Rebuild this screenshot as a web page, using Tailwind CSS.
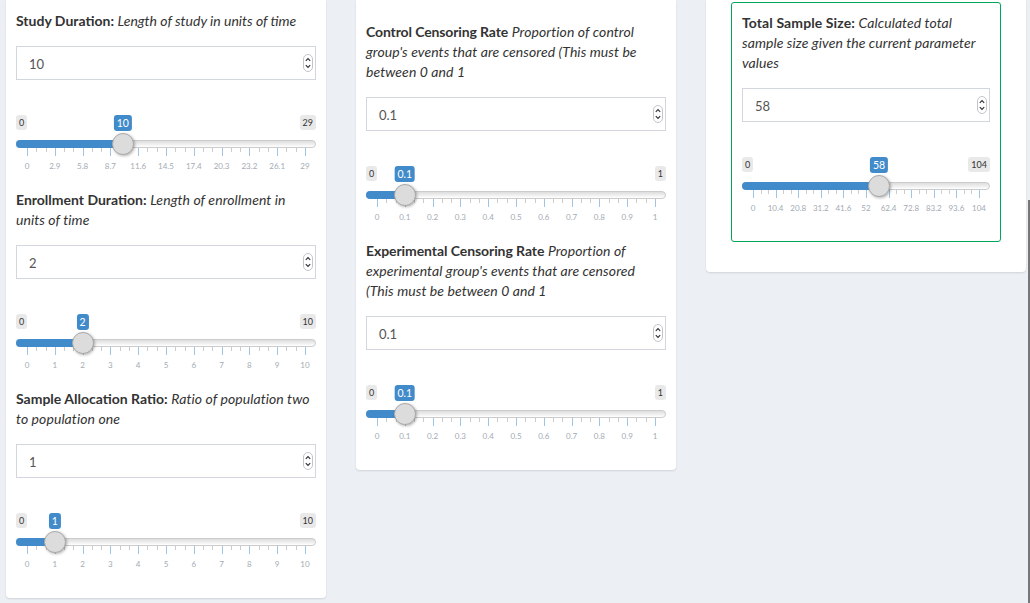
<!DOCTYPE html>
<html lang="en">
<head>
    <meta charset="UTF-8">
    <meta name="viewport" content="width=device-width, initial-scale=1.0">
    <title>Sample Size</title>
    <script src="https://cdn.jsdelivr.net/npm/@tailwindcss/browser@4"></script>
</head>
<body class="bg-[#ecf0f5] font-['Lato','Noto_Sans',sans-serif] text-[14px] leading-[20px] text-[#333]">
    <div class="relative h-[603px] w-[1030px] overflow-hidden">
        <div class="flex items-start gap-[30px] pl-[6px]">
            <!-- left column -->
            <div class="w-[320px] rounded-b-[4px] bg-white px-[10px] pt-[11px] pb-[10px] shadow-[0_1px_2px_rgba(0,0,0,0.12)]">
                <p class="mb-[15px]"><b>Study Duration:</b> <i>Length of study in units of time</i></p>
                <div data-value="10" data-max="29"></div>
                <p class="mb-[15px]"><b>Enrollment Duration:</b> <i class="tracking-[0.08px]">Length of enrollment in<br>units of time</i></p>
                <div data-value="2" data-max="10"></div>
                <p class="mb-[15px]"><b>Sample Allocation Ratio:</b> <i class="tracking-[0.08px]">Ratio of population two<br>to population one</i></p>
                <div data-value="1" data-max="10"></div>
            </div>

            <!-- middle column -->
            <div class="w-[320px] rounded-b-[4px] bg-white px-[10px] pt-[22px] pb-[10px] shadow-[0_1px_2px_rgba(0,0,0,0.12)]">
                <p class="mb-[15px]"><b class="tracking-[-0.12px]">Control Censoring Rate</b> <i class="tracking-[0.08px]">Proportion of control<br>group's events that are censored (This must be<br>between 0 and 1</i></p>
                <div data-value="0.1" data-max="1"></div>
                <p class="mb-[15px]"><b class="tracking-[-0.08px]">Experimental Censoring Rate</b> <i class="tracking-[0.08px]">Proportion of<br>experimental group's events that are censored<br>(This must be between 0 and 1</i></p>
                <div data-value="0.1" data-max="1"></div>
            </div>

            <!-- right column -->
            <div class="w-[320px] rounded-b-[4px] bg-white px-[25px] pt-[2px] pb-[30px] shadow-[0_1px_2px_rgba(0,0,0,0.12)]">
                <div class="rounded-[3px] border border-[#00a65a] px-[10px] pt-[10px] pb-[9px]">
                    <p class="mb-[15px]"><b class="tracking-[0.1px]">Total Sample Size:</b> <i class="tracking-[0.08px]">Calculated total<br>sample size given the current parameter<br>values</i></p>
                    <div data-value="58" data-max="104"></div>
                </div>
            </div>
        </div>

        <!-- scrollbar thumb -->
        <div class="absolute top-[200px] right-0 bottom-0 w-[2px] bg-[#777]"></div>
    </div>

    <script>
        function renderSlider(el) {
            const value = parseFloat(el.dataset.value);
            const max = parseFloat(el.dataset.max);
            // handle and grid run between 11px insets of the track
            const pos = (n) => `calc(11px + (100% - 22px) * ${n / max})`;

            let ticks = '';
            let labels = '';
            for (let i = 0; i <= 10; i++) {
                const n = i * max / 10;
                ticks += `<div class="absolute top-0 h-[8px] w-px bg-[#428bca]/50" style="left:${pos(n)}"></div>`;
                labels += `<div class="absolute top-[13px] -translate-x-1/2 text-[8px] leading-[10px] text-[#a3abb3]" style="left:${pos(n)}">${Number(n.toFixed(2))}</div>`;
                if (i < 10) {
                    ticks += `<div class="absolute top-0 h-[4px] w-px bg-[#999]/50" style="left:${pos(n + max / 30)}"></div>`;
                    ticks += `<div class="absolute top-0 h-[4px] w-px bg-[#999]/50" style="left:${pos(n + 2 * max / 30)}"></div>`;
                }
            }

            el.innerHTML = `
                <div class="relative mb-[35px]">
                    <input type="text" value="${el.dataset.value}" class="block h-[34px] w-full border border-[#d2d6de] pt-px pr-[30px] pl-[12px] text-[13px] text-[#555] outline-none">
                    <svg class="absolute top-[8px] right-[3px]" width="10" height="18" viewBox="0 0 10 18" fill="none">
                        <rect x="0.5" y="0.5" width="9" height="17" rx="4.5" fill="#fff" stroke="#c4c4c4"/>
                        <path d="M2.8 6.8 5 4.6l2.2 2.2M2.8 11.2 5 13.4l2.2-2.2" stroke="#333" stroke-width="1.2"/>
                    </svg>
                </div>
                <div class="relative h-[75px]">
                    <div class="flex h-[25px] items-start justify-between text-[9px] leading-[13px] text-[#333]">
                        <span class="rounded-[3px] bg-[#e9e9e9] px-[3px] py-[1px]">0</span>
                        <span class="rounded-[3px] bg-[#e9e9e9] px-[3px] py-[1px]">${max}</span>
                    </div>
                    <div class="absolute top-0 -translate-x-1/2 rounded-[3px] bg-[#428bca] px-[3px] py-[1px] text-[10.5px] leading-[14px] text-white" style="left:${pos(value)}">${el.dataset.value}</div>
                    <div class="relative h-[8px] rounded-[4px] border border-[#ccc] bg-gradient-to-b from-[#ddd] to-white">
                        <div class="absolute -top-px -bottom-px -left-px rounded-l-[4px] bg-[#428bca]" style="width:${pos(value)}"></div>
                    </div>
                    <div class="relative">${ticks}${labels}</div>
                    <div class="absolute top-[18px] z-10 size-[22px] -translate-x-1/2 rounded-full border border-[#aaa] bg-[#dcdcdc] shadow-[1px_1px_3px_rgba(0,0,0,0.3)]" style="left:${pos(value)}"></div>
                </div>`;
        }

        document.querySelectorAll('[data-value]').forEach(renderSlider);
    </script>
</body>
</html>
